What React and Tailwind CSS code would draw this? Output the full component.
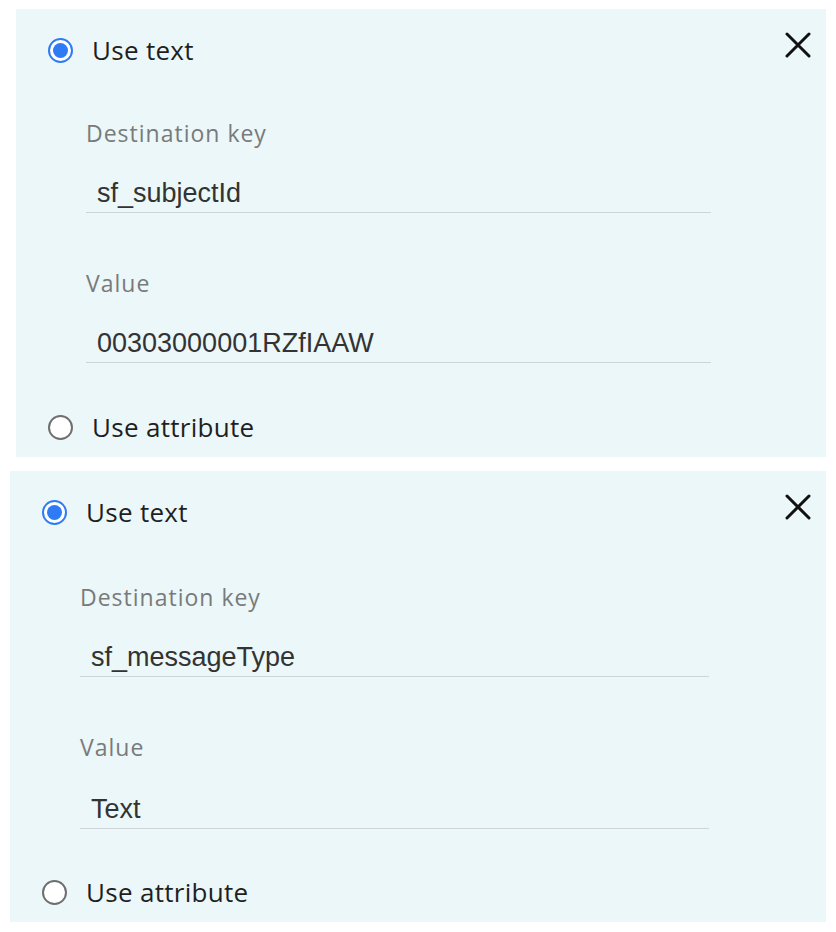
import React, { useState } from "react";

const label = { fontFamily: '"Open Sans", "Noto Sans", sans-serif' };
const mono = { fontFamily: '"Liberation Sans", Arial, sans-serif' };

function Radio({ checked }) {
  return checked ? (
    <span className="flex h-[25px] w-[25px] items-center justify-center rounded-full border-2 border-[#2f7bf5] bg-white">
      <span className="h-[15px] w-[15px] rounded-full bg-[#2f7bf5]" />
    </span>
  ) : (
    <span className="h-[25px] w-[25px] rounded-full border-2 border-[#6f6f6f] bg-white" />
  );
}

function CloseIcon() {
  return (
    <svg width="26" height="26" viewBox="0 0 26 26" fill="none">
      <path d="M2 2 L24 24 M24 2 L2 24" stroke="#111" strokeWidth="3" strokeLinecap="round" />
    </svg>
  );
}

function Field({ name, value, className, inputGap, lineWidth }) {
  return (
    <div className={className}>
      <div style={label} className="h-[30px] text-[23px] leading-[30px] tracking-[1px] text-[#7a7a7a]">
        {name}
      </div>
      <div
        className={"h-[40px] border-b border-[#cfd4d6] pl-[11px] pt-[2px] " + inputGap + " " + lineWidth}
      >
        <div style={mono} className="text-[27px] leading-[37px] text-[#333]">
          {value}
        </div>
      </div>
    </div>
  );
}

function Mapping({ keyName, value, className, s }) {
  const [mode, setMode] = useState("text");
  return (
    <div className={"bg-[#ebf7f8] " + className}>
      <div className="flex h-[82px] items-center justify-between pl-[32px] pr-[15px]">
        <button onClick={() => setMode("text")} className="flex items-center gap-[19px]">
          <Radio checked={mode === "text"} />
          <span style={label} className="text-[26px] tracking-[0.3px] text-[#1f1f1f]">Use text</span>
        </button>
        <button className="-mt-[10px]">
          <CloseIcon />
        </button>
      </div>
      <div className="pl-[70px]">
        <Field name="Destination key" value={keyName} className={s.f1} inputGap="mt-[25px]" lineWidth={s.w} />
        <Field name="Value" value={value} className="mt-[55px]" inputGap={s.g2} lineWidth={s.w} />
      </div>
      <button
        onClick={() => setMode("attr")}
        className={"flex h-[34px] items-center gap-[19px] pl-[32px] " + s.a}
      >
        <Radio checked={mode === "attr"} />
        <span style={label} className="text-[26px] tracking-[0.3px] text-[#1f1f1f]">Use attribute</span>
      </button>
    </div>
  );
}

export default function App() {
  return (
    <div className="min-h-[932px] w-[836px] bg-white pt-[9px]">
      <Mapping
        keyName="sf_subjectId"
        value="00303000001RZfIAAW"
        className="ml-[16px] h-[448px] w-[810px]"
        s={{ f1: "mt-[27px]", g2: "mt-[25px]", a: "mt-[47px]", w: "w-[625px]" }}
      />
      <Mapping
        keyName="sf_messageType"
        value="Text"
        className="ml-[10px] mt-[14px] h-[451px] w-[816px]"
        s={{ f1: "mt-[29px]", g2: "mt-[27px]", a: "mt-[46px]", w: "w-[629px]" }}
      />
    </div>
  );
}
